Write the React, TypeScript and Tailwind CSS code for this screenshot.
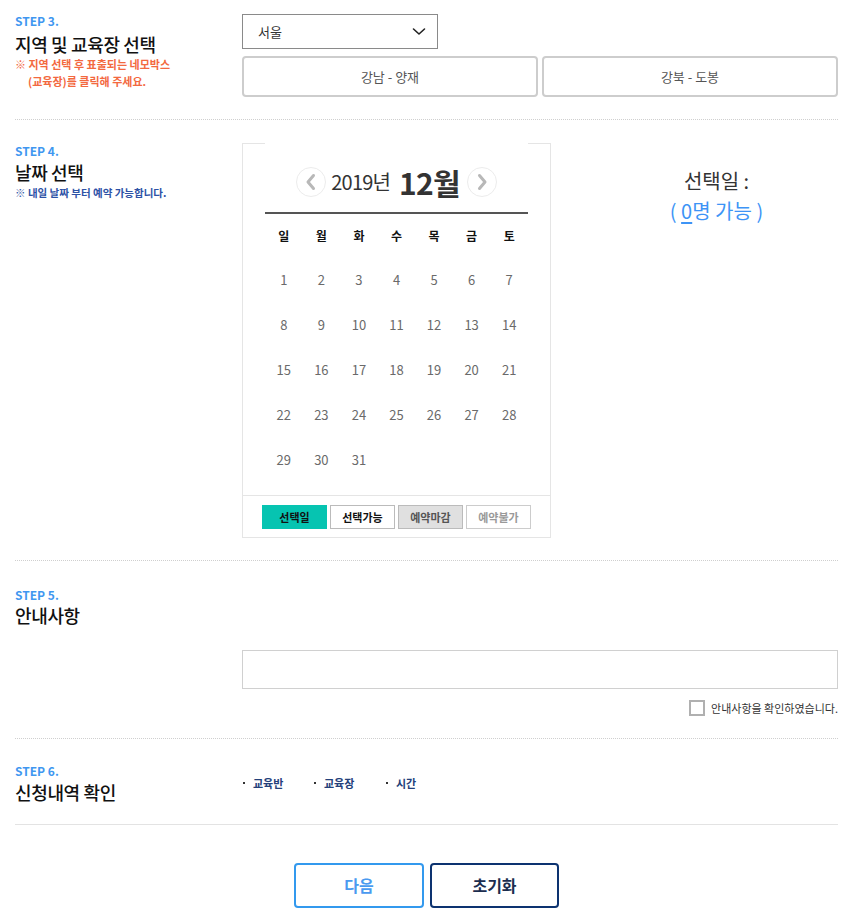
import React from "react";

const FONT = { fontFamily: '"Noto Sans CJK KR", "Noto Sans", sans-serif' };

function StepLabel({ n }: { n: number }) {
  return <div className="text-[12px] leading-[14px] font-bold text-[#3f97f0]">STEP {n}.</div>;
}

function Chevron({ dir }: { dir: "l" | "r" }) {
  return (
    <div className="w-[30px] h-[30px] rounded-full border border-[#ececec] flex items-center justify-center">
      <svg width="14" height="18" viewBox="0 0 14 18" fill="none">
        {dir === "l" ? (
          <polyline points="9.5,2.5 4,9 9.5,15.5" stroke="#b8b8b8" strokeWidth="3" strokeLinecap="round" strokeLinejoin="round" />
        ) : (
          <polyline points="4.5,2.5 10,9 4.5,15.5" stroke="#b8b8b8" strokeWidth="3" strokeLinecap="round" strokeLinejoin="round" />
        )}
      </svg>
    </div>
  );
}

const weekdays = ["일", "월", "화", "수", "목", "금", "토"];
const weeks: (number | null)[][] = [
  [1, 2, 3, 4, 5, 6, 7],
  [8, 9, 10, 11, 12, 13, 14],
  [15, 16, 17, 18, 19, 20, 21],
  [22, 23, 24, 25, 26, 27, 28],
  [29, 30, 31, null, null, null, null],
];

function Calendar() {
  return (
    <div className="w-[309px] border border-[#e5e5e5] flex flex-col">
      <div className="mx-[22px] -mt-px pt-px bg-white">
        <div className="h-[68px] pt-[8px] flex items-center justify-center">
          <Chevron dir="l" />
          <span className="ml-[5px] text-[20px] text-[#333] tracking-[-0.8px]">2019년</span>
          <span className="ml-[9px] text-[30px] font-semibold text-[#333] leading-none tracking-[-0.8px]">12월</span>
          <span className="ml-[7px]">
            <Chevron dir="r" />
          </span>
        </div>
        <div className="h-[2px] bg-[#555]" />
        <div className="grid grid-cols-7 h-[43px] pt-[1px] items-center text-center text-[12px] font-bold text-[#111]">
          {weekdays.map((w) => (
            <div key={w}>{w}</div>
          ))}
        </div>
        {weeks.map((wk, i) => (
          <div key={i} className="grid grid-cols-7 h-[45px] items-center text-center text-[13px] text-[#6a6a6a]">
            {wk.map((d, j) => (
              <div key={j}>{d ?? ""}</div>
            ))}
          </div>
        ))}
      </div>
      <div className="mt-[13px] border-t border-[#e5e5e5] pt-[9px] pb-[8px] flex justify-center gap-[3px] text-[11px] font-bold">
        <div className="w-[65px] h-[24px] bg-[#06c4b1] text-[#111] flex items-center justify-center">선택일</div>
        <div className="w-[65px] h-[24px] border border-[#bbb] text-[#111] flex items-center justify-center">선택가능</div>
        <div className="w-[65px] h-[24px] border border-[#bbb] bg-[#e0e0e0] text-[#555] flex items-center justify-center">예약마감</div>
        <div className="w-[65px] h-[24px] border border-[#ccc] text-[#999] flex items-center justify-center">예약불가</div>
      </div>
    </div>
  );
}

export default function App() {
  return (
    <div className="w-[845px] h-[917px] bg-white overflow-hidden" style={FONT}>
      <div className="pl-[15px] pr-[7px]">
        {/* STEP 3 */}
        <div className="flex pt-[14px] pb-[22px] border-b border-dotted border-[#cfcfcf]">
          <div className="w-[227px]">
            <StepLabel n={3} />
            <div className="mt-[4px] text-[18px] leading-[24px] font-medium text-[#111] tracking-[-0.02em]">지역 및 교육장 선택</div>
            <div className="text-[11px] leading-[17px] font-bold text-[#f3693f]">
              <div>※ 지역 선택 후 표출되는 네모박스</div>
              <div className="pl-[13px]">(교육장)를 클릭해 주세요.</div>
            </div>
          </div>
          <div className="flex-1">
            <div className="w-[196px] h-[35px] border border-[#8a8a8a] flex items-center justify-between pl-[15px] pr-[11px]">
              <span className="text-[13px] text-[#333]">서울</span>
              <svg width="14" height="9" viewBox="0 0 14 9" fill="none">
                <polyline points="1.5,2 7,7 12.5,2" stroke="#222" strokeWidth="1.6" strokeLinecap="round" strokeLinejoin="round" />
              </svg>
            </div>
            <div className="mt-[7px] flex gap-[4px]">
              <button className="flex-1 h-[41px] rounded-[4px] border-2 border-[#cdcdcd] text-[13px] text-[#555] bg-white">강남 - 양재</button>
              <button className="flex-1 h-[41px] rounded-[4px] border-2 border-[#cdcdcd] text-[13px] text-[#555] bg-white">강북 - 도봉</button>
            </div>
          </div>
        </div>

        {/* STEP 4 */}
        <div className="flex pt-[23px] pb-[22px] border-b border-dotted border-[#cfcfcf]">
          <div className="w-[227px] pt-[1px]">
            <StepLabel n={4} />
            <div className="mt-[2px] text-[18px] leading-[24px] font-medium text-[#111] tracking-[-0.02em]">날짜 선택</div>
            <div className="mt-[1px] text-[10.5px] leading-[16px] font-bold text-[#2d52a6]">※ 내일 날짜 부터 예약 가능합니다.</div>
          </div>
          <Calendar />
          <div className="ml-[44px] flex-1 pt-[23px] text-center text-[20px] leading-[30px]">
            <div className="text-[#333]">선택일 :</div>
            <div className="text-[#3d94f6]">
              (&nbsp;<span className="underline underline-offset-[3px]">0</span>명 가능&nbsp;)
            </div>
          </div>
        </div>

        {/* STEP 5 */}
        <div className="flex pb-[21px] border-b border-dotted border-[#cfcfcf]">
          <div className="w-[227px] pt-[27px]">
            <StepLabel n={5} />
            <div className="mt-[3px] text-[18px] leading-[20px] font-medium text-[#111] tracking-[-0.02em]">안내사항</div>
          </div>
          <div className="flex-1 pt-[89px]">
            <div className="h-[39px] border border-[#d0d0d0]" />
            <div className="mt-[11px] flex items-center justify-end gap-[6px]">
              <div className="w-[16px] h-[16px] border-2 border-[#b0b0b0] bg-white" />
              <span className="text-[11px] text-[#333]">안내사항을 확인하였습니다.</span>
            </div>
          </div>
        </div>

        {/* STEP 6 */}
        <div className="flex pt-[25px] pb-[21px] border-b border-[#e3e3e3]">
          <div className="w-[227px]">
            <StepLabel n={6} />
            <div className="mt-[3px] text-[18px] leading-[22px] font-medium text-[#111] tracking-[-0.02em]">신청내역 확인</div>
          </div>
          <div className="flex-1 self-start pt-[11px] flex items-center text-[11px] leading-[16px] font-bold text-[#23407a]">
            {["교육반", "교육장", "시간"].map((t, i) => (
              <div key={t} className={`flex items-center gap-[8px] ${i === 0 ? "w-[71px]" : "w-[72px]"}`}>
                <span className="w-[2px] h-[2px] ml-[1px] bg-[#333]" />
                <span>{t}</span>
              </div>
            ))}
          </div>
        </div>

        {/* Buttons */}
        <div className="pt-[38px] flex justify-center gap-[6px]">
          <button className="w-[130px] h-[45px] rounded-[4px] border-2 border-[#3399ee] text-[16px] font-bold text-[#4a9af0] bg-white">다음</button>
          <button className="w-[129px] h-[45px] rounded-[4px] border-2 border-[#0d3370] text-[16px] font-bold text-[#1c2d4f] bg-white">초기화</button>
        </div>
      </div>
    </div>
  );
}
